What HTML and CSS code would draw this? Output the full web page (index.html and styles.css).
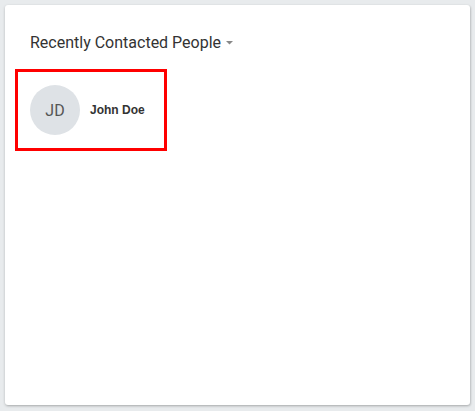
FILE: index.html
```html
<!DOCTYPE html>
<html>
<head>
<meta charset="utf-8">
<link rel="stylesheet" href="styles.css">
</head>
<body>
<div class="card">
  <div class="header">
    <span class="title">Recently Contacted People</span>
    <svg class="caret" width="7" height="4" viewBox="0 0 7 4"><path d="M0 0 L7 0 L3.5 3.5 Z" fill="#888"/></svg>
  </div>
  <div class="people">
    <div class="person">
      <div class="avatar">JD</div>
      <div class="name">John Doe</div>
    </div>
  </div>
</div>
</body>
</html>
```
FILE: styles.css
```css
html, body {
  margin: 0;
  padding: 0;
}
body {
  background: #e8ebed;
  width: 475px;
  height: 411px;
  padding: 5px;
  box-sizing: border-box;
  font-family: Roboto, "Liberation Sans", sans-serif;
}
.card {
  background: #fff;
  width: 465px;
  height: 400px;
  border-radius: 3px;
  box-shadow: 0 1px 3px rgba(0,0,0,0.2), 1px 1px 2px rgba(0,0,0,0.1);
  box-sizing: border-box;
  padding: 25px 10px 0 10px;
}
.header {
  display: flex;
  align-items: center;
  padding-left: 15px;
  height: 24px;
}
.title {
  font-size: 16px;
  color: #333;
}
.caret {
  margin-left: 5px;
  margin-top: 2px;
}
.people {
  margin-top: 15px;
}
.person {
  display: inline-flex;
  align-items: center;
  width: 152px;
  height: 82px;
  box-sizing: border-box;
  border: 3px solid #ff0000;
  padding-left: 12px;
}
.avatar {
  width: 50px;
  height: 50px;
  border-radius: 50%;
  background: #dee2e6;
  color: #555;
  font-size: 16px;
  display: flex;
  align-items: center;
  justify-content: center;
}
.name {
  margin-left: 10px;
  font-family: "Liberation Sans", Arial, sans-serif;
  font-size: 12px;
  font-weight: bold;
  color: #333;
}
```
